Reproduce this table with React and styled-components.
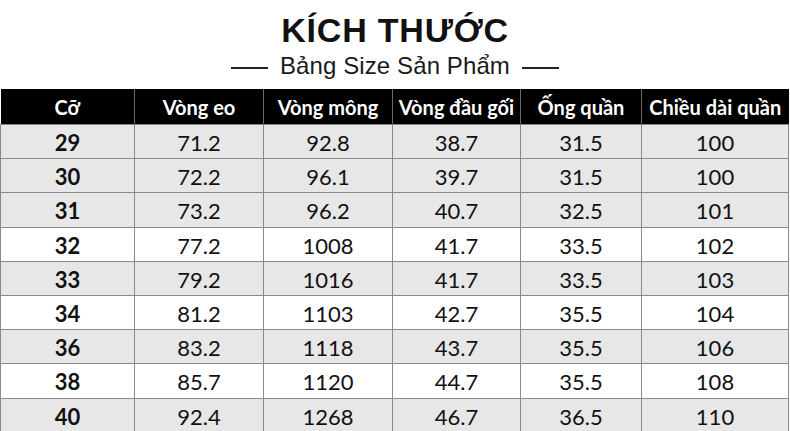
import React from 'react';
import styled, { createGlobalStyle } from 'styled-components';

const GlobalStyle = createGlobalStyle`
  html, body {
    margin: 0;
    padding: 0;
    background: #ffffff;
  }
  body {
    width: 790px;
    height: 431px;
    overflow: hidden;
  }
`;

const Page = styled.div`
  width: 790px;
  display: flex;
  flex-direction: column;
  align-items: center;
`;

const Title = styled.h1`
  margin: 0;
  padding-top: 10px;
  font-family: "Liberation Sans", Arial, sans-serif;
  font-weight: 700;
  font-size: 34px;
  line-height: 40px;
  letter-spacing: 0.8px;
  color: #111111;
`;

const Subtitle = styled.div`
  margin-top: 2px;
  display: flex;
  align-items: center;
  gap: 12px;
  font-family: "Liberation Sans", Arial, sans-serif;
  font-size: 24px;
  line-height: 28px;
  letter-spacing: 0.1px;
  color: #1a1a1a;
`;

const Dash = styled.span`
  display: block;
  width: 37px;
  height: 2px;
  margin-top: 3px;
  background: #222222;
`;

const Table = styled.table`
  margin-top: 9px;
  width: 788px;
  align-self: flex-start;
  border-collapse: collapse;
  table-layout: fixed;
  font-family: Lato, "Noto Sans", sans-serif;
`;

const HeadCell = styled.th`
  height: 35px;
  padding: 0;
  background: #000000;
  color: #ffffff;
  font-weight: 700;
  font-size: 20px;
  text-align: center;
  white-space: nowrap;
  border-left: 1px solid #6a6a6a;
  &:first-child {
    border-left: none;
  }
`;

const Row = styled.tr`
  height: 34.2px;
  background: ${(p) => (p.$shaded ? '#e7e7e7' : '#ffffff')};
`;

const Cell = styled.td`
  padding: 2px 0 0;
  text-align: center;
  font-size: 22px;
  font-weight: ${(p) => (p.$bold ? 700 : 400)};
  color: #111111;
  border: 1px solid #8a8a8a;
`;

const columns = [
  { label: 'Cỡ', width: 134 },
  { label: 'Vòng eo', width: 129 },
  { label: 'Vòng mông', width: 129 },
  { label: 'Vòng đầu gối', width: 128 },
  { label: 'Ống quần', width: 121 },
  { label: 'Chiều dài quần', width: 147 },
];

const rows = [
  ['29', '71.2', '92.8', '38.7', '31.5', '100', true],
  ['30', '72.2', '96.1', '39.7', '31.5', '100', true],
  ['31', '73.2', '96.2', '40.7', '32.5', '101', true],
  ['32', '77.2', '1008', '41.7', '33.5', '102', false],
  ['33', '79.2', '1016', '41.7', '33.5', '103', true],
  ['34', '81.2', '1103', '42.7', '35.5', '104', false],
  ['36', '83.2', '1118', '43.7', '35.5', '106', true],
  ['38', '85.7', '1120', '44.7', '35.5', '108', false],
  ['40', '92.4', '1268', '46.7', '36.5', '110', true],
];

export default function App() {
  return (
    <>
      <GlobalStyle />
      <Page>
        <Title>KÍCH THƯỚC</Title>
        <Subtitle>
          <Dash />
          Bảng Size Sản Phẩm
          <Dash />
        </Subtitle>
        <Table>
          <colgroup>
            {columns.map((c) => (
              <col key={c.label} style={{ width: c.width }} />
            ))}
          </colgroup>
          <thead>
            <tr>
              {columns.map((c) => (
                <HeadCell key={c.label}>{c.label}</HeadCell>
              ))}
            </tr>
          </thead>
          <tbody>
            {rows.map((r) => (
              <Row key={r[0]} $shaded={r[6]}>
                {r.slice(0, 6).map((v, i) => (
                  <Cell key={i} $bold={i === 0}>
                    {v}
                  </Cell>
                ))}
              </Row>
            ))}
          </tbody>
        </Table>
      </Page>
    </>
  );
}
